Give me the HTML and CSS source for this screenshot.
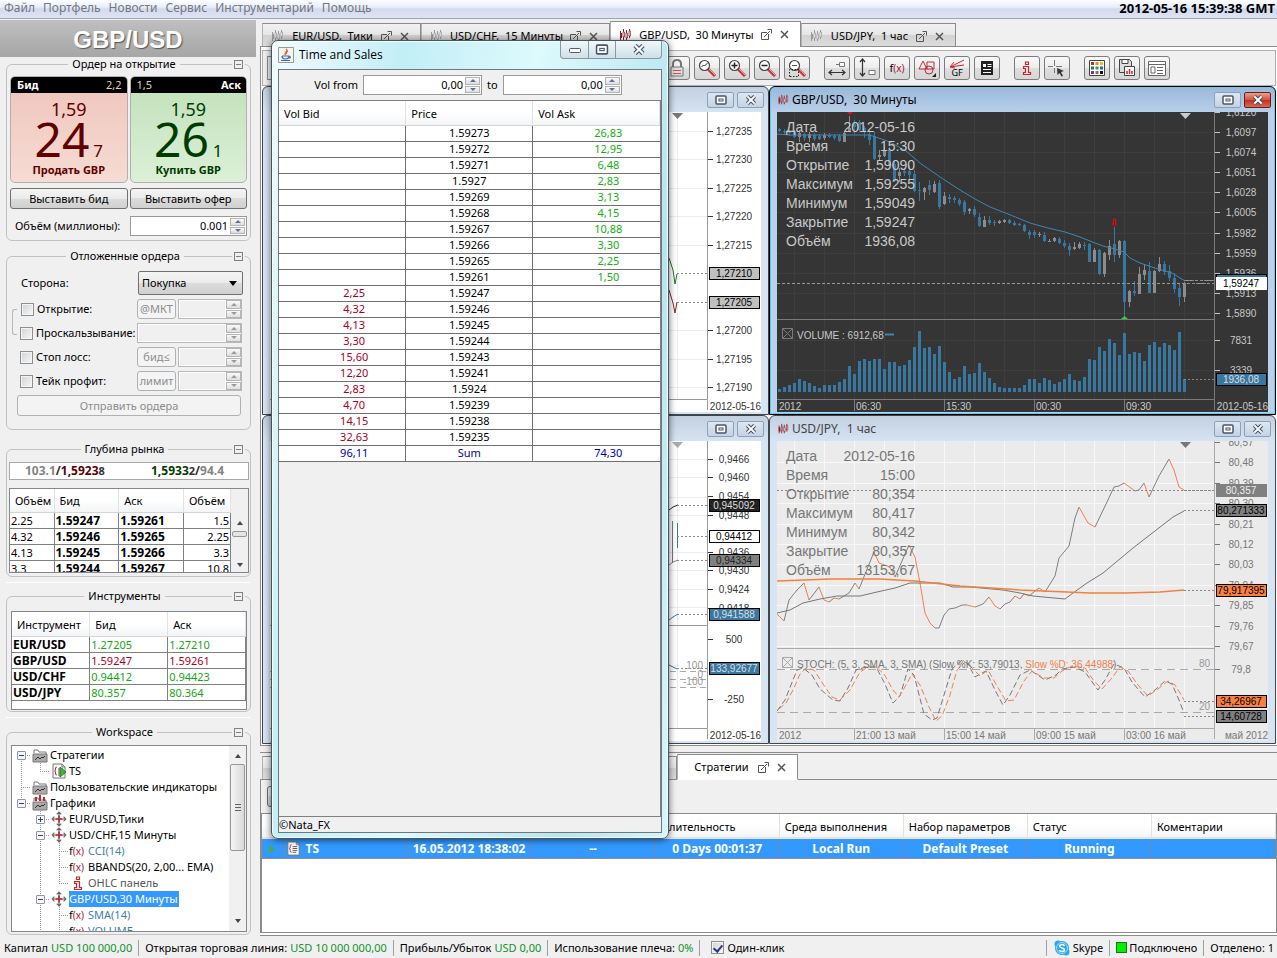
FILE: index.html
```html
<!DOCTYPE html>
<html lang="ru">
<head>
    <meta charset="UTF-8">
    <meta name="viewport" content="width=device-width, initial-scale=1.0">
    <title>GBP/USD - Trading Platform</title>
    <link rel="stylesheet" href="styles.css">
</head>
<body>
    <svg class="sprite" aria-hidden="true">
        <symbol id="i-candles" viewBox="0 0 14 14">
            <path d="M2.500 3v9M5.500 1v11M8.500 2v10M11.500 1v9" stroke="currentColor" fill="none"/>
            <path d="M2 5h2v5H2z" fill="currentColor"/>
            <path d="M5 4h1.500v5H5zM8 5h1.500v5H8zM11 3h1.500v5H11z" fill="#fff" stroke="currentColor" stroke-width=".7"/>
        </symbol>
        <symbol id="i-detach" viewBox="0 0 11 11">
            <path d="M6 3.500H.500v7h7V5M3 8l6-6M6.500.500h4v4" stroke="currentColor" fill="none"/>
        </symbol>
        <symbol id="i-close" viewBox="0 0 9 9">
            <path d="M1 1l7 7M8 1l-7 7" stroke="currentColor" stroke-width="1.500" fill="none"/>
        </symbol>
        <symbol id="i-max" viewBox="0 0 12 10">
            <rect x="1" y="1" width="10" height="8" rx="1" fill="#fff" stroke="#48566b" stroke-width="1.500"/>
            <rect x="4" y="4" width="4" height="2" fill="#fff" stroke="#48566b"/>
        </symbol>
        <symbol id="i-x" viewBox="0 0 12 11">
            <path d="M2 1.500l8 8M10 1.500l-8 8" stroke="#48566b" stroke-width="4.500"/>
            <path d="M2 1.500l8 8M10 1.500l-8 8" stroke="#fff" stroke-width="2.200"/>
        </symbol>
        <symbol id="i-lens" viewBox="0 0 20 20">
            <path d="M11 11l7 7" stroke="#c4343c" stroke-width="3"/>
            <path d="M12 11l6 6" stroke="#eda0a4"/>
            <circle cx="7.500" cy="7.500" r="5" fill="#fff" stroke="#444" stroke-width="1.200"/>
        </symbol>
        <symbol id="i-move" viewBox="0 0 14 14">
            <path d="M7 1v12M1 7h12M5 3l2-2 2 2M5 11l2 2 2-2M3 5L1 7l2 2M11 5l2 2-2 2" stroke="#666" fill="none"/>
            <path d="M7 4v6M4 7h6" stroke="#c22832" stroke-width="1.500"/>
        </symbol>
        <symbol id="i-folder" viewBox="0 0 16 16">
            <path d="M2 6V3h4l1 2h7v2" fill="#fff" stroke="#777"/>
            <path d="M1 7h14v8H1z" fill="#aaa" stroke="#777"/>
            <path d="M3 13l3-3 2 2 2-2 1 1 2-2" stroke="#333" fill="none"/>
        </symbol>
        <symbol id="i-info" viewBox="0 0 10 14">
            <path d="M3.500 1h3v2.500h-3zM1.500 5.500h5v6h2v2h-7v-2h2v-4h-2z" fill="#fbe5e6" stroke="#c22832" stroke-width="1.200"/>
        </symbol>
        <symbol id="i-script" viewBox="0 0 16 16">
            <path d="M2 1h9l3 3v11H2z" fill="#fff" stroke="#777"/>
            <path d="M11 1v3h3" fill="none" stroke="#777"/>
            <path d="M6 4q-2 0-1.500 2 .3 2-1 2 1.300 0 1 2-.5 2 1.500 2" fill="none" stroke="#c22832"/>
            <path d="M7 6h5M7 8h5M7 10h5M7 12h4" stroke="#555"/>
        </symbol>
    </svg>

    <header class="menubar">
        <nav class="menu">
            <a href="#">Файл</a>
            <a href="#">Портфель</a>
            <a href="#">Новости</a>
            <a href="#">Сервис</a>
            <a href="#">Инструментарий</a>
            <a href="#">Помощь</a>
        </nav>
        <time class="clock">2012-05-16 15:39:38 GMT</time>
    </header>

    <main class="main">
        <aside class="sidebar">
            <h1 class="pair">GBP/USD</h1>

            <fieldset class="group order">
                <legend>Ордер на открытие</legend>
                <button class="collapse" aria-label="Свернуть"></button>
                <div class="quotes">
                    <button class="quote bid">
                        <span class="quote-head"><b>Бид</b><i>2,2</i></span>
                        <span class="quote-big">1,59</span>
                        <span class="quote-pips">24<small>7</small></span>
                        <strong>Продать GBP</strong>
                    </button>
                    <button class="quote ask">
                        <span class="quote-head"><i>1,5</i><b>Аск</b></span>
                        <span class="quote-big">1,59</span>
                        <span class="quote-pips">26<small>1</small></span>
                        <strong>Купить GBP</strong>
                    </button>
                </div>
                <div class="place">
                    <button class="btn">Выставить бид</button>
                    <button class="btn">Выставить офер</button>
                </div>
                <div class="volume">
                    <label for="amount">Объём (миллионы):</label>
                    <div class="spin">
                        <input type="text" id="amount" value="0.001">
                        <span class="arrows"><button aria-label="Больше"></button><button aria-label="Меньше"></button></span>
                    </div>
                </div>
            </fieldset>

            <fieldset class="group pending">
                <legend>Отложенные ордера</legend>
                <button class="collapse" aria-label="Свернуть"></button>
                <div class="row">
                    <label for="side">Сторона:</label>
                    <select id="side"><option>Покупка</option></select>
                </div>
                <div class="row linked">
                    <label><input type="checkbox">Открытие:</label>
                    <button class="mini" disabled>@МКТ</button>
                    <div class="spin off">
                        <input type="text" aria-label="Цена открытия" disabled>
                        <span class="arrows"><button disabled aria-label="Больше"></button><button disabled aria-label="Меньше"></button></span>
                    </div>
                </div>
                <div class="row">
                    <label><input type="checkbox">Проскальзывание:</label>
                    <div class="spin off">
                        <input type="text" aria-label="Проскальзывание" disabled>
                        <span class="arrows"><button disabled aria-label="Больше"></button><button disabled aria-label="Меньше"></button></span>
                    </div>
                </div>
                <div class="row">
                    <label><input type="checkbox">Стоп лосс:</label>
                    <button class="mini" disabled>бид≤</button>
                    <div class="spin off">
                        <input type="text" aria-label="Стоп лосс" disabled>
                        <span class="arrows"><button disabled aria-label="Больше"></button><button disabled aria-label="Меньше"></button></span>
                    </div>
                </div>
                <div class="row">
                    <label><input type="checkbox">Тейк профит:</label>
                    <button class="mini" disabled>лимит</button>
                    <div class="spin off">
                        <input type="text" aria-label="Тейк профит" disabled>
                        <span class="arrows"><button disabled aria-label="Больше"></button><button disabled aria-label="Меньше"></button></span>
                    </div>
                </div>
                <button class="btn send" disabled>Отправить ордера</button>
            </fieldset>

            <fieldset class="group depth">
                <legend>Глубина рынка</legend>
                <button class="collapse" aria-label="Свернуть"></button>
                <div class="best">
                    <span><em>103.1</em>/<b class="sell">1,5923</b><small>8</small></span>
                    <span><b class="buy">1,5933</b><small>2</small>/<em>94.4</em></span>
                </div>
                <div class="scroller">
                    <table class="grid">
                        <thead>
                            <tr><th>Объём</th><th>Бид</th><th>Аск</th><th>Объём</th></tr>
                        </thead>
                        <tbody>
                            <tr><td>2.25</td><td><b>1.59247</b></td><td><b>1.59261</b></td><td>1.5</td></tr>
                            <tr><td>4.32</td><td><b>1.59246</b></td><td><b>1.59265</b></td><td>2.25</td></tr>
                            <tr><td>4.13</td><td><b>1.59245</b></td><td><b>1.59266</b></td><td>3.3</td></tr>
                            <tr><td>3.3</td><td><b>1.59244</b></td><td><b>1.59267</b></td><td>10.8</td></tr>
                        </tbody>
                    </table>
                    <div class="scrollbar"><i class="up"></i><i class="thumb"></i><i class="down"></i></div>
                </div>
            </fieldset>
            <hr>

            <fieldset class="group instruments">
                <legend>Инструменты</legend>
                <button class="collapse" aria-label="Свернуть"></button>
                <div class="frame">
                    <table class="grid">
                        <thead>
                            <tr><th>Инструмент</th><th>Бид</th><th>Аск</th></tr>
                        </thead>
                        <tbody>
                            <tr class="rise"><th>EUR/USD</th><td>1.27205</td><td>1.27210</td></tr>
                            <tr class="fall"><th>GBP/USD</th><td>1.59247</td><td>1.59261</td></tr>
                            <tr class="rise"><th>USD/CHF</th><td>0.94412</td><td>0.94423</td></tr>
                            <tr class="rise"><th>USD/JPY</th><td>80.357</td><td>80.364</td></tr>
                        </tbody>
                    </table>
                </div>
            </fieldset>
            <hr>

            <fieldset class="group workspace">
                <legend>Workspace</legend>
                <button class="collapse" aria-label="Свернуть"></button>
                <div class="scroller">
                    <ul class="tree">
                        <li><i class="cell down"><s class="minus"></s></i><svg class="ico"><use href="#i-folder"/></svg>Стратегии</li>
                        <li><i class="cell pipe"></i><i class="cell elbow"></i><svg class="ico" viewBox="0 0 16 16"><use href="#i-script"/><path d="M9 4l6 5-6 5z" fill="#4caf3a" stroke="#2c7d20"/></svg>TS</li>
                        <li><i class="cell pipe tee"></i><svg class="ico"><use href="#i-folder"/></svg>Пользовательские индикаторы</li>
                        <li><i class="cell elbow"><s class="minus"></s></i><svg class="ico" viewBox="0 0 16 16"><use href="#i-folder"/><path d="M4 6V2M8 6V0M12 6V2" stroke="#d0202c" stroke-width="2"/></svg>Графики</li>
                        <li><i class="cell"></i><i class="cell pipe tee"><s class="plus"></s></i><svg class="ico"><use href="#i-move"/></svg>EUR/USD,Тики</li>
                        <li><i class="cell"></i><i class="cell pipe tee"><s class="minus"></s></i><svg class="ico"><use href="#i-move"/></svg>USD/CHF,15 Минуты</li>
                        <li class="ind"><i class="cell"></i><i class="cell pipe"></i><i class="cell pipe tee"></i><span class="fx">f<u>(x)</u></span>CCI(14)</li>
                        <li><i class="cell"></i><i class="cell pipe"></i><i class="cell pipe tee"></i><span class="fx">f<u>(x)</u></span>BBANDS(20, 2,00... EMA)</li>
                        <li class="ohlc"><i class="cell"></i><i class="cell pipe"></i><i class="cell elbow"></i><svg class="ico"><use href="#i-info"/></svg>OHLC панель</li>
                        <li><i class="cell"></i><i class="cell pipe tee"><s class="minus"></s></i><svg class="ico"><use href="#i-move"/></svg><span class="selected">GBP/USD,30 Минуты</span></li>
                        <li class="ind"><i class="cell"></i><i class="cell pipe"></i><i class="cell pipe tee"></i><span class="fx">f<u>(x)</u></span>SMA(14)</li>
                        <li class="ind"><i class="cell"></i><i class="cell pipe"></i><i class="cell pipe tee"></i><span class="fx">f<u>(x)</u></span>VOLUME</li>
                    </ul>
                    <div class="scrollbar"><i class="up"></i><i class="thumb"></i><i class="down"></i></div>
                </div>
            </fieldset>
        </aside>

        <section class="desk">
            <div class="tabs">
                <div class="tab t1"><svg class="cnd"><use href="#i-candles"/></svg><span>EUR/USD,&nbsp; Тики</span><svg class="det"><use href="#i-detach"/></svg><svg class="cls"><use href="#i-close"/></svg></div>
                <div class="tab t2"><svg class="cnd"><use href="#i-candles"/></svg><span>USD/CHF,&nbsp; 15 Минуты</span><svg class="det"><use href="#i-detach"/></svg><svg class="cls"><use href="#i-close"/></svg></div>
                <div class="tab t3 active"><svg class="cnd"><use href="#i-candles"/></svg><span>GBP/USD,&nbsp; 30 Минуты</span><svg class="det"><use href="#i-detach"/></svg><svg class="cls"><use href="#i-close"/></svg></div>
                <div class="tab t4"><svg class="cnd"><use href="#i-candles"/></svg><span>USD/JPY,&nbsp; 1 час</span><svg class="det"><use href="#i-detach"/></svg><svg class="cls"><use href="#i-close"/></svg></div>
            </div>

            <div class="charts">
                <div class="toolbar">
                    <button class="picker" aria-label="Инструмент"></button>
                    <div class="tools">
                        <button aria-label="Блокировка"><svg viewBox="0 0 20 20"><path d="M6 10V6q0-4 4-4t4 4v4" fill="none" stroke="#777" stroke-width="2"/><path d="M4 9h12v9H4z" fill="#ddd" stroke="#777"/><path d="M6 12l1 1 1-1 1 1 1-1 1 1 1-1 1 1 1-1M6 15l1 1 1-1 1 1 1-1 1 1 1-1 1 1 1-1" fill="none" stroke="#d05058"/></svg></button>
                        <button aria-label="Авто масштаб"><svg viewBox="0 0 20 20"><use href="#i-lens"/><path d="M4.500 9l2-2 1 1 3-3" fill="none" stroke="#333"/></svg></button>
                        <button aria-label="Увеличить"><svg viewBox="0 0 20 20"><use href="#i-lens"/><path d="M4.500 7.500h6M7.500 4.500v6" stroke="#222" stroke-width="1.500"/></svg></button>
                        <button aria-label="Уменьшить"><svg viewBox="0 0 20 20"><use href="#i-lens"/><path d="M4.500 7.500h6" stroke="#222" stroke-width="1.500"/></svg></button>
                        <button aria-label="Масштаб области"><svg viewBox="0 0 20 20"><use href="#i-lens"/><path d="M5 7.500h5" stroke="#555"/><path d="M2.500 18.500v-7h9v7z" fill="none" stroke="#222" stroke-dasharray="1.500 1.500"/></svg></button>
                    </div>
                    <div class="tools">
                        <button aria-label="Горизонтальный сдвиг"><svg viewBox="0 0 20 20"><path d="M2 14.500h16M5 12l-3 2.500L5 17M15 12l3 2.500-3 2.500" fill="none" stroke="#333" stroke-width="1.200"/><path d="M12.500 4.500h5v4h-5zM9 6.500h3" fill="#fff" stroke="#777"/></svg></button>
                        <button aria-label="Вертикальный сдвиг"><svg viewBox="0 0 20 20"><path d="M5.500 1v17M3 4l2.500-3L8 4M3 15l2.500 3L8 15" fill="none" stroke="#333" stroke-width="1.200"/><path d="M12 12.500h6v4h-6z" fill="#fff" stroke="#777"/></svg></button>
                        <button class="func" aria-label="Индикаторы">f<u>(x)</u></button>
                        <button aria-label="Фигуры"><svg viewBox="0 0 20 20"><path d="M6 3l4 8H2zM10 4h7v7h-7z" fill="none" stroke="#c22832"/><circle cx="12" cy="12" r="4" fill="none" stroke="#c22832"/><path d="M15 19h4v-4z" fill="#222"/></svg></button>
                        <button class="gf" aria-label="Ганн и Фибоначчи"><svg viewBox="0 0 20 10"><path d="M3 8L17 1M3 8l14-2M3 8l4-5M3 8l5 1" fill="none" stroke="#c22832"/></svg>GF</button>
                        <button aria-label="Новости"><svg viewBox="0 0 20 20"><path d="M4 3h12v14H4z" fill="#222"/><path d="M6 6h3v3H6zM10.500 6h4v1h-4zM10.500 8h4v1h-4zM6 11h8v1H6zM6 14h8v1H6z" fill="#fff"/></svg></button>
                    </div>
                    <div class="tools">
                        <button aria-label="Информация"><svg viewBox="0 0 20 20"><use href="#i-info" x="5" y="3" width="10" height="14"/></svg></button>
                        <button aria-label="Курсор"><svg viewBox="0 0 20 20"><path d="M7.500 2v6M7.500 10v5M1 8.500h5M9 8.500h6" stroke="#777"/><path d="M10 10l7 3-3 1 2 4-1.500.600-2-3.600-2 2z" fill="#333"/></svg></button>
                    </div>
                    <div class="tools">
                        <button aria-label="Темы"><svg viewBox="0 0 20 20"><path d="M2.500 2.500h15v15h-15z" fill="#fff" stroke="#444"/><path d="M4 4h3v3H4z" fill="#c22832"/><path d="M8.500 4h3v3h-3z" fill="#e88a20"/><path d="M13 4h3v3h-3z" fill="#e8c020"/><path d="M4 8.500h3v3H4z" fill="#208040"/><path d="M8.500 8.500h3v3h-3z" fill="#30a060"/><path d="M13 8.500h3v3h-3z" fill="#2868c0"/><path d="M4 13h3v3H4z" fill="#8030a0"/><path d="M8.500 13h3v3h-3z" fill="#777"/><path d="M13 13h3v3h-3z" fill="#111"/></svg></button>
                        <button aria-label="Сохранить"><svg viewBox="0 0 20 20"><path d="M2.500 1.500h10l2 2v11h-12z" fill="#ddd" stroke="#444"/><path d="M5 1.500h6v4H5z" fill="#fff" stroke="#444"/><path d="M7.500 8.500h10v9h-10z" fill="#fff" stroke="#444"/><path d="M10 16v-3M12.500 16v-5M15 16v-3" stroke="#c22832" stroke-width="1.500"/></svg></button>
                        <button aria-label="Шаблоны"><svg viewBox="0 0 20 20"><path d="M1.500 3.500h17v14h-17zM1.500 6.500h17" fill="#fff" stroke="#666"/><path d="M4 9h4v6H4z" fill="none" stroke="#666"/><path d="M10 9.500h6M10 12.500h6M10 15.500h6" stroke="#666"/></svg></button>
                    </div>
                </div>

                <div class="mdi">
                    <article class="win">
                        <h2><span></span><button aria-label="Развернуть"><svg><use href="#i-max"/></svg></button><button aria-label="Закрыть"><svg><use href="#i-x"/></svg></button></h2>
                        <svg class="chart" id="eurusd" viewBox="270 112 491 300" preserveAspectRatio="xMaxYMin slice"></svg>
                    </article>
                    <article class="win front">
                        <h2><svg class="cnd"><use href="#i-candles"/></svg><span>GBP/USD,&nbsp; 30 Минуты</span><button aria-label="Развернуть"><svg><use href="#i-max"/></svg></button><button class="red" aria-label="Закрыть"><svg><use href="#i-x"/></svg></button></h2>
                        <svg class="chart dark" id="gbpusd" viewBox="777 112 491 300" preserveAspectRatio="xMaxYMin slice"></svg>
                    </article>
                    <article class="win">
                        <h2><span></span><button aria-label="Развернуть"><svg><use href="#i-max"/></svg></button><button aria-label="Закрыть"><svg><use href="#i-x"/></svg></button></h2>
                        <svg class="chart" id="usdchf" viewBox="270 441 491 300" preserveAspectRatio="xMaxYMin slice"></svg>
                    </article>
                    <article class="win">
                        <h2><svg class="cnd"><use href="#i-candles"/></svg><span>USD/JPY,&nbsp; 1 час</span><button aria-label="Развернуть"><svg><use href="#i-max"/></svg></button><button aria-label="Закрыть"><svg><use href="#i-x"/></svg></button></h2>
                        <svg class="chart grey" id="usdjpy" viewBox="777 441 491 300" preserveAspectRatio="xMaxYMin slice"></svg>
                    </article>
                </div>
            </div>

            <div class="bottom">
                <div class="tabs">
                    <div class="tab back"></div>
                    <div class="tab strategies active"><span>Стратегии</span><svg class="det"><use href="#i-detach"/></svg><svg class="cls"><use href="#i-close"/></svg></div>
                </div>
                <div class="actions"><button class="btn" aria-label="Запустить"></button></div>
                <div class="runs">
                    <table>
                        <colgroup><col class="c-run"><col class="c-name"><col span="7"></colgroup>
                        <thead>
                            <tr><th></th><th></th><th></th><th></th><th>Длительность</th><th>Среда выполнения</th><th>Набор параметров</th><th>Статус</th><th>Коментарии</th></tr>
                        </thead>
                        <tbody>
                            <tr><td><i class="play"></i></td><td class="name"><svg class="ico"><use href="#i-script"/></svg>TS</td><td>16.05.2012 18:38:02</td><td>--</td><td>0 Days 00:01:37</td><td>Local Run</td><td>Default Preset</td><td>Running</td><td></td></tr>
                        </tbody>
                    </table>
                </div>
            </div>
        </section>
    </main>

    <footer class="status">
        <span>Капитал <b>USD 100 000,00</b></span>
        <span>Открытая торговая линия: <b>USD 10 000 000,00</b></span>
        <span>Прибыль/Убыток <b>USD 0,00</b></span>
        <span>Использование плеча: <b>0%</b></span>
        <label><input type="checkbox" checked>Один-клик</label>
        <span class="push"><svg class="skype" viewBox="0 0 16 16"><circle cx="8" cy="8" r="7" fill="#2aaae8"/><circle cx="4" cy="4" r="3.500" fill="#2aaae8"/><circle cx="12" cy="12" r="3.500" fill="#2aaae8"/><circle cx="8" cy="8" r="5.500" fill="none" stroke="#bfe6fa" stroke-width=".8"/><path d="M10.500 6q-.5-1.500-2.500-1.500T5.500 6q0 1.300 2.500 2t2.500 2q0 1.500-2.500 1.500T5.500 10" fill="none" stroke="#fff" stroke-width="1.500"/></svg>Skype</span>
        <span><i class="led"></i>Подключено</span>
        <span>Отделено: 1</span>
    </footer>

    <div class="dialog" role="dialog" aria-label="Time and Sales">
        <div class="caption">
            <svg class="java" viewBox="0 0 16 16"><path d="M.500.500h15v15H.500z" fill="#f4f4f4" stroke="#999"/><path d="M8 2q2 1 0 3t0 3M10 4q-2 1-1.500 3" fill="none" stroke="#e06a1c" stroke-width="1.300"/><path d="M4 9h7q0 3-3.500 3T4 9M11 9.500q2.500 0 .5 2M3 13.500h9" fill="none" stroke="#3b6a9c" stroke-width="1.200"/></svg>
            <span>Time and Sales</span>
            <div class="caption-buttons">
                <button class="min" aria-label="Свернуть"><svg viewBox="0 0 14 10"><rect x="1.500" y="4" width="11" height="4" rx="1" fill="#fff" stroke="#555c66"/></svg></button>
                <button class="max" aria-label="Развернуть"><svg viewBox="0 0 12 10"><use href="#i-max"/></svg></button>
                <button class="close" aria-label="Закрыть"><svg viewBox="0 0 12 11"><use href="#i-x"/></svg></button>
            </div>
        </div>
        <div class="client">
            <div class="filter">
                <label for="vol-from">Vol from</label>
                <div class="spin">
                    <input type="text" id="vol-from" value="0,00">
                    <span class="arrows"><button aria-label="Больше"></button><button aria-label="Меньше"></button></span>
                </div>
                <label for="vol-to">to</label>
                <div class="spin">
                    <input type="text" id="vol-to" value="0,00">
                    <span class="arrows"><button aria-label="Больше"></button><button aria-label="Меньше"></button></span>
                </div>
            </div>
            <div class="ticks">
                <table>
                    <thead>
                        <tr><th>Vol Bid</th><th>Price</th><th>Vol Ask</th></tr>
                    </thead>
                    <tbody>
                        <tr><td></td><td>1.59273</td><td>26,83</td></tr>
                        <tr><td></td><td>1.59272</td><td>12,95</td></tr>
                        <tr><td></td><td>1.59271</td><td>6,48</td></tr>
                        <tr><td></td><td>1.5927</td><td>2,83</td></tr>
                        <tr><td></td><td>1.59269</td><td>3,13</td></tr>
                        <tr><td></td><td>1.59268</td><td>4,15</td></tr>
                        <tr><td></td><td>1.59267</td><td>10,88</td></tr>
                        <tr><td></td><td>1.59266</td><td>3,30</td></tr>
                        <tr><td></td><td>1.59265</td><td>2,25</td></tr>
                        <tr><td></td><td>1.59261</td><td>1,50</td></tr>
                        <tr><td>2,25</td><td>1.59247</td><td></td></tr>
                        <tr><td>4,32</td><td>1.59246</td><td></td></tr>
                        <tr><td>4,13</td><td>1.59245</td><td></td></tr>
                        <tr><td>3,30</td><td>1.59244</td><td></td></tr>
                        <tr><td>15,60</td><td>1.59243</td><td></td></tr>
                        <tr><td>12,20</td><td>1.59241</td><td></td></tr>
                        <tr><td>2,83</td><td>1.5924</td><td></td></tr>
                        <tr><td>4,70</td><td>1.59239</td><td></td></tr>
                        <tr><td>14,15</td><td>1.59238</td><td></td></tr>
                        <tr><td>32,63</td><td>1.59235</td><td></td></tr>
                        <tr class="sum"><td>96,11</td><td>Sum</td><td>74,30</td></tr>
                    </tbody>
                </table>
            </div>
            <div class="copy">©Nata_FX</div>
        </div>
    </div>

    <script src="charts.js"></script>
</body>
</html>
```
FILE: styles.css
```css
* {
    box-sizing: border-box;
}
body {
    margin: 0;
    height: 100vh;
    display: flex;
    flex-direction: column;
    overflow: hidden;
    background: #f0f0f0;
    color: #000;
    font-family: "Noto Sans", "Open Sans", sans-serif;
    font-size: 11px;
    line-height: 16px;
    white-space: nowrap;
}
button, input, select {
    font: inherit;
    color: inherit;
    margin: 0;
    padding: 0;
}
button:disabled {
    color: #8c8c8c;
}
table {
    border-collapse: collapse;
    table-layout: fixed;
    width: 100%;
}
b, strong {
    font-weight: bold;
}
i, em {
    font-style: normal;
}
u, s {
    text-decoration: none;
}
.sprite {
    display: none;
}

/* menu */
.menubar {
    display: flex;
    justify-content: space-between;
    height: 19px;
    padding: 0 2px 0 4px;
    background: linear-gradient(#fdfeff, #e8edf7 40%, #d2daee 50%, #dfe4f4);
    border-bottom: 1px solid #a0a4ac;
    flex: none;
}
.menu {
    display: flex;
    gap: 8px;
    font-size: 12px;
}
.menu a {
    color: #74777f;
    text-decoration: none;
}
.clock {
    font-size: 13px;
    font-weight: bold;
}

.main {
    display: flex;
    flex: 1;
    min-height: 0;
}

/* left column */
.sidebar {
    width: 256px;
    flex: none;
    display: flex;
    flex-direction: column;
}
.pair {
    margin: 1px 0 0;
    height: 37px;
    background: linear-gradient(#bfbfbf, #a6a6a6);
    color: #fff;
    text-shadow: 1px 1px 1px #555;
    text-align: center;
    font: bold 24px/40px "Liberation Sans", Arial, sans-serif;
    flex: none;
}
.group {
    position: relative;
    min-width: 0;
    margin: 0 5px 0 6px;
    padding: 0;
    border: 1px solid #c2c2c2;
    border-radius: 6px;
    flex: none;
}
.group legend {
    display: flex;
    align-items: center;
    margin: 0 auto;
    padding: 0 0 0 4px;
}
/* the border goes on a little way after the caption */
.group legend::after {
    content: "";
    width: 9px;
    height: 1px;
    margin-left: 4px;
    background: #c2c2c2;
}
.group.order {
    margin-top: -1px;
}
.collapse {
    position: absolute;
    right: 7px;
    top: -12px;
    width: 9px;
    height: 9px;
    border: 1px solid #808080;
    background: linear-gradient(#808080, #808080) center / 5px 1px no-repeat #f0f0f0;
    box-shadow: 0 0 0 2px #f0f0f0;
}
.sidebar hr {
    width: 244px;
    margin: 5px 6px;
    border: 0;
    border-top: 1px solid #fff;
    flex: none;
}
.order {
    height: 185px;
}
.quotes, .place {
    display: flex;
    gap: 2px;
    padding: 4px 3px 0;
}
.quote {
    flex: 1;
    height: 107px;
    border: 1px solid #b5aeae;
    border-radius: 5px;
    overflow: hidden;
    display: flex;
    flex-direction: column;
    align-items: center;
}
.quote-head {
    align-self: stretch;
    display: flex;
    justify-content: space-between;
    padding: 0 5px 0 6px;
    background: #000;
    color: #fff;
}
.quote-head i {
    color: #d8d8b8;
}
.quote-big {
    font-size: 18px;
    line-height: 20px;
    margin-top: 6px;
}
.quote-pips {
    display: flex;
    align-items: baseline;
    height: 40px;
    font-size: 48px;
    line-height: 40px;
}
.quote-pips small {
    font-size: 17px;
    line-height: 17px;
    margin-left: 4px;
}
.quote strong {
    margin-top: 3px;
}
.bid {
    background: linear-gradient(#f0c4bc, #f5dcd4);
    color: #600000;
}
.ask {
    background: linear-gradient(#c0e0b8, #dcf0d8);
    color: #003c00;
}
.place {
    padding-top: 5px;
}
.btn {
    flex: 1;
    height: 21px;
    border: 1px solid #707070;
    border-radius: 3px;
    background: linear-gradient(#f4f4f4, #ebebeb 50%, #dcdcdc 50%, #d0d0d0);
    line-height: 18px;
}
.btn:disabled {
    border-color: #adb2b5;
    background: #f3f3f3;
}
.volume {
    display: flex;
    align-items: center;
    justify-content: space-between;
    padding: 7px 3px 0 8px;
}
.volume .spin {
    width: 117px;
}

.spin {
    display: flex;
    height: 20px;
    padding: 1px;
    border: 1px solid #9a9a9a;
    background: #fff;
}
.spin input {
    flex: 1;
    min-width: 0;
    border: 0;
    padding-right: 2px;
    background: none;
    text-align: right;
}
.arrows {
    width: 15px;
    display: flex;
    flex-direction: column;
    gap: 1px;
}
.arrows button {
    flex: 1;
    border: 1px solid #b4b4b4;
    background: linear-gradient(#fafafa, #dedede);
    display: flex;
    align-items: center;
    justify-content: center;
}
.arrows button::before {
    content: "";
    border: 3px solid transparent;
    border-top-width: 0;
    border-bottom-color: #5f6f9c;
}
.arrows button:last-child::before {
    border-top: 3px solid #5f6f9c;
    border-bottom-width: 0;
}
.spin.off {
    border-color: #b8b8b8;
    padding: 0;
}
.spin.off input {
    background: #f0f0f0;
    margin: 1px;
}
.spin.off .arrows button::before {
    border-bottom-color: #9a9a9a;
}
.spin.off .arrows button:last-child::before {
    border-top-color: #9a9a9a;
}

.pending {
    margin-top: 7px;
    height: 182px;
    padding: 7px 8px 0 10px;
}
.row {
    display: flex;
    align-items: center;
    gap: 2px;
    height: 24px;
}
.row:not(:has([type="checkbox"])) {
    padding-left: 4px;
    margin-bottom: 2px;
}
.row label {
    flex: 1;
    display: flex;
    align-items: center;
    gap: 3px;
}
select {
    width: 105px;
    height: 24px;
    appearance: none;
    border: 1px solid #707070;
    border-radius: 2px;
    padding-left: 3px;
    background: linear-gradient(#f4f4f4, #ebebeb 50%, #dcdcdc 50%, #d0d0d0);
}
.row:has(select)::after {
    content: "";
    width: 0;
    margin: 0 5px 0 -16px;
    border: 4px solid transparent;
    border-top: 5px solid #000;
    border-bottom: 0;
}
[type="checkbox"] {
    appearance: none;
    width: 13px;
    height: 13px;
    flex: none;
    border: 1px solid #8e8f8f;
    background: linear-gradient(135deg, #cfd3d8, #f8f8f8);
    box-shadow: inset 0 0 0 1px #f4f4f4;
}
.row label:has([type="checkbox"]) {
    min-width: 0;
    padding-left: 3px;
}
.mini {
    width: 39px;
    height: 20px;
    border: 1px solid #adb2b5;
    border-radius: 3px;
    background: #f4f4f4;
}
.row .spin {
    width: 64px;
    flex: none;
}
.row label + .spin {
    width: 105px;
}
.linked::before {
    content: "";
    align-self: flex-start;
    width: 4px;
    height: 24px;
    margin: 12px -1px 0 -5px;
    border: 1px solid #b8b8b8;
    border-right: 0;
    border-radius: 3px 0 0 3px;
}
.send {
    width: 224px;
    margin-top: 2px;
}

.depth {
    margin-top: 11px;
    height: 136px;
    padding: 5px 1px 0 2px;
}
.best {
    display: flex;
    justify-content: space-between;
    height: 18px;
    padding: 0 24px 0 15px;
    border: 1px solid #a8a8a8;
    background: #fff;
    color: #333;
    font-weight: bold;
    font-size: 12px;
}
.best em {
    color: #858585;
}
.best small {
    font-size: 11px;
}
.sell {
    color: #600000;
}
.buy {
    color: #003c00;
}
.scroller, .frame {
    display: flex;
    overflow: hidden;
    background: #fff;
    border: 1px solid #828790;
}
.depth .scroller {
    height: 85px;
    margin-top: 8px;
    align-items: flex-start;
}
.depth .scrollbar {
    align-self: stretch;
}
.grid thead th {
    height: 24px;
    padding: 2px 5px 0;
    font-weight: normal;
    text-align: left;
    background: linear-gradient(#fff 50%, #f2f4f6);
    border-right: 1px solid #e0e2e6;
    border-bottom: 1px solid #d5d5d5;
}
.depth .grid thead th {
    height: 23px;
}
.grid td, .grid tbody th {
    height: 16px;
    padding: 0 1px;
    line-height: 15px;
    text-align: left;
    border-right: 1px solid #808080;
    border-bottom: 1px solid #808080;
}
.depth th:nth-child(1) {
    width: 44px;
}
.depth th:nth-child(4) {
    width: 47px;
}
.depth .grid td:last-child {
    text-align: right;
}
.grid b, .grid tbody th {
    font-size: 12px;
}
.scrollbar {
    width: 17px;
    flex: none;
    background: #f0f0f0;
    display: flex;
    flex-direction: column;
    align-items: center;
    padding: 8px 0;
}
.depth .scrollbar {
    padding: 32px 0 5px;
}
.scrollbar .up, .scrollbar .down {
    border: 3px solid transparent;
    border-top: 0;
    border-bottom: 4px solid #444;
}
.scrollbar .down {
    margin-top: auto;
    border-bottom: 0;
    border-top: 4px solid #444;
}
.thumb {
    width: 15px;
    height: 87px;
    margin-top: 6px;
    border: 1px solid #979797;
    border-radius: 2px;
    background:
        repeating-linear-gradient(#666 0 1px, transparent 1px 3px) center / 6px 7px no-repeat,
        linear-gradient(90deg, #f5f5f5, #d9d9d9);
}
.depth .thumb {
    height: 6px;
    background: #e4e4e4;
}

.instruments {
    height: 124px;
    padding: 7px 3px 0 4px;
}
.instruments + hr {
    margin-bottom: 6px;
}
.instruments .frame {
    height: 99px;
    align-items: flex-start;
}
.rise td {
    color: #10a810;
}
.fall td {
    color: #b00020;
}

.workspace {
    height: 211px;
    padding: 5px 3px 0 4px;
}
.workspace .scroller {
    height: 187px;
}
.tree {
    flex: 1;
    min-width: 0;
    margin: 0;
    padding: 1px 0 0;
    list-style: none;
    overflow: hidden;
}
.tree li {
    display: flex;
    height: 16px;
    align-items: center;
}
.tree .ico {
    width: 16px;
    height: 16px;
    margin: 0 2px 0 1px;
    flex: none;
}
.tree .ohlc .ico {
    height: 14px;
}
.cell {
    width: 19px;
    height: 16px;
    flex: none;
    display: flex;
    align-items: center;
    justify-content: center;
    background-repeat: no-repeat;
}
/* dotted guides: vertical part first, branch second */
.pipe {
    background-image: repeating-linear-gradient(#999 0 1px, transparent 1px 2px);
    background-size: 1px 16px;
    background-position: 9px 0;
}
.tree .down {
    background-image: repeating-linear-gradient(#999 0 1px, transparent 1px 2px), repeating-linear-gradient(90deg, #999 0 1px, transparent 1px 2px);
    background-size: 1px 8px, 10px 1px;
    background-position: 9px 8px, 9px 8px;
}
.elbow {
    background-image: repeating-linear-gradient(#999 0 1px, transparent 1px 2px), repeating-linear-gradient(90deg, #999 0 1px, transparent 1px 2px);
    background-size: 1px 8px, 10px 1px;
    background-position: 9px 0, 9px 8px;
}
.tee {
    background-image: repeating-linear-gradient(#999 0 1px, transparent 1px 2px), repeating-linear-gradient(90deg, #999 0 1px, transparent 1px 2px);
    background-size: 1px 16px, 10px 1px;
    background-position: 9px 0, 9px 8px;
}
.minus, .plus {
    width: 9px;
    height: 9px;
    border: 1px solid #8a96a8;
    border-radius: 1px;
    background: linear-gradient(#345, #345) center / 5px 1px no-repeat, #f4f6fa;
}
.plus {
    background: linear-gradient(#345, #345) center / 5px 1px no-repeat, linear-gradient(#345, #345) center / 1px 5px no-repeat, #f4f6fa;
}
.fx {
    width: 19px;
    flex: none;
}
.fx u, .func u {
    color: #a02030;
    font-size: 10px;
}
.ind {
    color: #3f7fa8;
}
.ind .fx {
    color: #000;
}
.ohlc {
    color: #555;
}
.selected {
    background: #3399ff;
    color: #fff;
    padding-right: 1px;
}

/* right column */
.desk {
    flex: 1;
    min-width: 0;
    margin-left: 4px;
    display: flex;
    flex-direction: column;
}
.tabs {
    display: flex;
    align-items: flex-end;
    height: 28px;
    padding-left: 2px;
    border-bottom: 1px solid #8c8c8c;
    flex: none;
}
.tab {
    display: flex;
    align-items: center;
    height: 23px;
    padding: 2px 7px 0;
    border: 1px solid #8c8c8c;
    border-left-color: #b0b0b0;
    border-bottom: 0;
    background: linear-gradient(#f2f2f2, #e6e6e6 50%, #d2d2d2 50%, #dcdcdc);
}
.tab.active {
    height: 26px;
    margin-bottom: -1px;
    padding-top: 0;
    background: #fff;
}
.t1 {
    width: 159px;
}
.t2 {
    width: 189px;
}
.t3 {
    width: 191px;
}
.t4 {
    width: 155px;
}
.tab span {
    margin: 0 auto;
}
.cnd {
    width: 14px;
    height: 14px;
    color: #999;
}
.active .cnd, .win .cnd {
    color: #8c2028;
}
.det {
    width: 11px;
    height: 11px;
    color: #555;
    margin-right: 8px;
}
.cls {
    width: 9px;
    height: 9px;
    color: #555;
    margin-right: 4px;
}
.charts {
    flex: 1;
    min-height: 0;
    display: flex;
    flex-direction: column;
    border-left: 1px solid #8c8c8c;
    border-bottom: 1px solid #8c8c8c;
    padding: 3px 1px 1px 1px;
    background: #fff;
}
.toolbar {
    display: flex;
    align-items: center;
    gap: 14px;
    height: 36px;
    padding: 0 4px;
    border: 1px solid #b0b0b0;
    background: #f0f0f0;
    flex: none;
}
.picker {
    width: 383px;
    height: 24px;
    border: 1px solid #8c8c8c;
    background: #f0f0f0;
}
.tools {
    display: flex;
    gap: 4px;
}
.tools button {
    width: 26px;
    height: 24px;
    border: 1px solid #7c7c7c;
    border-radius: 3px;
    background: linear-gradient(#f8f8f8, #ededed 50%, #dedede 50%, #d6d6d6);
    display: flex;
    align-items: center;
    justify-content: center;
    line-height: 10px;
}
.tools svg {
    width: 20px;
    height: 20px;
}
.tools .gf {
    flex-direction: column;
    font-size: 9px;
    line-height: 8px;
}
.tools .gf svg {
    height: 10px;
}
.mdi {
    flex: 1;
    min-height: 0;
    display: grid;
    grid-template-columns: 1fr 1fr;
    grid-template-rows: 1fr 1fr;
    background: #fff;
}
.win {
    min-width: 0;
    min-height: 0;
    display: flex;
    flex-direction: column;
    padding: 0 7px 2px;
    border: 1px solid #40454c;
    border-radius: 6px 6px 0 0;
    background: linear-gradient(#c2d0e0, #d7e4f2 26px);
}
.win.front {
    background: linear-gradient(#9ab8d8, #b9d1ea 26px);
    box-shadow: inset 0 0 0 1px #6ec8e8;
    border-color: #000;
}
.win h2 {
    display: flex;
    align-items: center;
    height: 25px;
    margin: 0 -3px 0 0;
    gap: 3px;
    font-size: 12px;
    font-weight: normal;
    flex: none;
}
.win:not(.front) h2 {
    color: #444;
}
.win h2 .cnd {
    width: 12px;
    height: 12px;
}
.win h2 span {
    flex: 1;
}
.win h2 button {
    width: 27px;
    height: 16px;
    border: 1px solid #8ea0b8;
    border-radius: 2px;
    background: linear-gradient(#dde7f2, #c4d3e4);
    display: flex;
    align-items: center;
    justify-content: center;
}
.win h2 button svg {
    width: 12px;
    height: 10px;
}
.win h2 .red {
    background: linear-gradient(#e8a08c, #d0503c 50%, #c03020 50%, #d86850);
    border-color: #6c2018;
}
.chart {
    flex: 1;
    min-height: 0;
    width: 100%;
    background: #fff;
    font-family: "Liberation Sans", Arial, sans-serif;
    font-size: 10px;
    --ink: #333;
    --line: #999;
    --grid: #ececec;
}
.chart.dark {
    background: #353535;
    --ink: #c8c8c8;
    --line: #7a7a7a;
    --grid: #3e3e3e;
}
.chart.grey {
    background: #ebebeb;
    --ink: #777;
    --line: #aaa;
    --grid: #f8f8f8;
}
.chart text {
    fill: var(--ink);
}
.chart .info {
    font-size: 14px;
}
.chart .axis {
    stroke: var(--line);
    fill: none;
}
.chart .gridline {
    stroke: var(--grid);
    fill: none;
}

/* strategies */
.bottom {
    height: 191px;
    display: flex;
    flex-direction: column;
    padding-top: 6px;
    flex: none;
}
.bottom .tabs {
    border-top: 1px solid #8c8c8c;
    height: 28px;
}
.bottom .tab.active {
    border-bottom: 1px solid #fff;
}
.back {
    width: 415px;
}
.strategies {
    width: 121px;
}
.actions {
    height: 33px;
    padding: 6px;
    border-left: 1px solid #8c8c8c;
    flex: none;
}
.actions .btn {
    width: 60px;
}
.runs {
    flex: 1;
    min-height: 0;
    margin: 0 0 4px 0;
    border: 1px solid #8c8c8c;
    border-width: 1px 1px 1px 2px;
    background: #fff;
    box-shadow: 0 2px 0 #fff, 0 3px 0 #8c8c8c;
}
.c-run {
    width: 20px;
}
.c-name {
    width: 125px;
}
.runs th {
    height: 24px;
    padding: 2px 5px 0;
    border-right: 1px solid #e0e2e6;
    border-bottom: 2px solid #e4e4e4;
    font-weight: normal;
    text-align: left;
    background: linear-gradient(#fff 50%, #f2f4f6);
    overflow: hidden;
}
.runs td {
    height: 20px;
    padding: 0;
    border-right: 1px solid #6a8cb0;
    background: #3399ff;
    border-bottom: 1px solid #8c8c8c;
    color: #fff;
    font-weight: bold;
    font-size: 12px;
    line-height: 17px;
    text-align: center;
}
.runs .name {
    text-align: left;
}
.runs .ico {
    width: 15px;
    height: 15px;
    margin: 0 5px 0 3px;
    vertical-align: -3px;
}
.play {
    display: inline-block;
    border: 4px solid transparent;
    border-left: 6px solid #48b030;
    border-right: 0;
}

/* status */
.status {
    display: flex;
    align-items: center;
    height: 21px;
    padding: 0 3px 0 4px;
    flex: none;
}
.status > * {
    display: flex;
    align-items: center;
    gap: 3px;
    height: 16px;
    padding-right: 6px;
    margin-right: 6px;
    border-right: 1px solid #a0a0a0;
}
.status > :last-child {
    padding: 0;
    margin: 0;
    border: 0;
}
.status b {
    font-weight: normal;
    color: #10902a;
}
.status label {
    margin-left: 5px;
    border: 0;
}
.status [type="checkbox"]:checked {
    display: flex;
}
.status [type="checkbox"]:checked::before {
    content: "";
    width: 4px;
    height: 7px;
    margin: 1px auto;
    border: solid #2c3c80;
    border-width: 0 2px 2px 0;
    transform: rotate(40deg);
}
.status .push {
    margin-left: auto;
}
.push::before {
    content: "";
    height: 16px;
    border-left: 1px solid #a0a0a0;
    margin-right: 4px;
}
.skype {
    width: 16px;
    height: 16px;
}
.led {
    width: 11px;
    height: 11px;
    margin-right: -1px;
    background: #00f000;
    border: 1px solid #207020;
}

/* floating Time and Sales window */
.dialog {
    position: absolute;
    left: 271px;
    top: 40px;
    width: 398px;
    height: 799px;
    padding: 0 6px 5px;
    display: flex;
    flex-direction: column;
    border: 1px solid #46545f;
    border-radius: 7px;
    background: linear-gradient(100deg, #f2fbfd, #c2eef6 25%, #ddfafc 50%, #b8e4f0 80%, #d8f6fa);
    box-shadow: 0 1px 7px rgba(0, 0, 0, 0.6), inset 0 0 0 1px #f4ffff;
}
.caption {
    display: flex;
    align-items: flex-start;
    height: 28px;
    font-family: "Open Sans", sans-serif;
    font-size: 12px;
    flex: none;
}
.java {
    width: 16px;
    height: 16px;
    margin-top: 6px;
}
.caption span {
    flex: 1;
    padding: 6px 5px 0;
}
.caption-buttons {
    display: flex;
}
.caption-buttons button {
    width: 27px;
    height: 18px;
    border: 1px solid #8a98a4;
    border-top: 0;
    border-right-width: 0;
    background: linear-gradient(#f0f8fa, #cfe0e8);
    display: flex;
    align-items: center;
    justify-content: center;
}
.caption-buttons .min {
    border-radius: 0 0 0 4px;
    width: 28px;
}
.caption-buttons .close {
    width: 47px;
    border-right-width: 1px;
    border-radius: 0 0 4px 0;
}
.caption-buttons svg {
    width: 14px;
    height: 11px;
}
.client {
    flex: 1;
    min-height: 0;
    display: flex;
    flex-direction: column;
    border: 1px solid #6e7880;
    background: #f0f0f0;
}
.filter {
    display: flex;
    align-items: center;
    justify-content: center;
    gap: 5px;
    height: 30px;
    padding-right: 4px;
    flex: none;
}
.filter .spin {
    width: 119px;
}
.ticks {
    flex: 1;
    border: 1px solid #808080;
    border-width: 1px 1px 1px 0;
}
.ticks th {
    height: 24px;
    padding: 2px 5px 0;
    border-right: 1px solid #e0e2e6;
    border-bottom: 1px solid #d5d5d5;
    font-weight: normal;
    text-align: left;
    background: linear-gradient(#fff 50%, #f2f4f6);
}
.ticks td {
    height: 16px;
    padding: 0;
    line-height: 14px;
    text-align: center;
    vertical-align: top;
    background: #fff;
    border-right: 1px solid #707070;
    border-bottom: 1px solid #707070;
}
.ticks td:first-child {
    color: #a80020;
    padding-left: 24px;
}
.ticks td:last-child {
    color: #10b010;
    padding-left: 24px;
    border-right: 0;
}
.ticks .sum td {
    color: #0000a0;
}
.copy {
    height: 15px;
    line-height: 15px;
    flex: none;
}
```
FILE: charts.js
```js
// every chart svg uses workspace coordinates, see its viewBox
function el(parent, name, attrs, text) {
    const node = document.createElementNS('http://www.w3.org/2000/svg', name);
    for (const key in attrs) node.setAttribute(key, attrs[key]);
    if (text) node.textContent = text;
    parent.appendChild(node);
    return node;
}

function line(svg, points, color, extra) {
    el(svg, 'polyline', Object.assign({ points: points, fill: 'none', stroke: color }, extra));
}

function grid(svg, xs, ys, left, right, top, bottom) {
    xs.forEach(x => el(svg, 'path', { class: 'gridline', d: `M${x}.5 ${top}V${bottom}` }));
    ys.forEach(y => el(svg, 'path', { class: 'gridline', d: `M${left} ${y}.5H${right}` }));
}

function frame(svg, left, axisX, splitY, bottomY, end) {
    el(svg, 'path', { class: 'axis', d: `M${axisX}.5 ${end - 300}V${bottomY}M${left} ${splitY}.5H${axisX}M${left} ${bottomY}.5H${axisX}.5V${end - 2}` });
}

function labels(svg, axisX, list) {
    list.forEach(([y, text]) => {
        el(svg, 'path', { d: `M${axisX + 1} ${y}.5h5`, stroke: 'var(--ink)' });
        el(svg, 'text', { x: axisX + 27, y: y + 4, 'text-anchor': 'middle' }, text);
    });
}

function tag(svg, axisX, y, text, fill, color, border) {
    el(svg, 'path', { d: `M${axisX - 30} ${y}.5h31`, stroke: '#888', 'stroke-dasharray': '2 2' });
    el(svg, 'rect', { x: axisX + 2.5, y: y - 5.5, width: 50, height: 12, fill: fill, stroke: border || '#000' });
    el(svg, 'text', { x: axisX + 27, y: y + 4, 'text-anchor': 'middle', style: `fill:${color}` }, text);
}

function times(svg, y, list) {
    list.forEach(([x, text]) => {
        if (x > 780) el(svg, 'path', { class: 'axis', d: `M${x}.5 ${y - 11}v11` });
        el(svg, 'text', { x: x + 2, y: y - 1 }, text);
    });
}

function info(svg, top, values) {
    const names = ['Дата', 'Время', 'Открытие', 'Максимум', 'Минимум', 'Закрытие', 'Объём'];
    names.forEach((name, i) => {
        el(svg, 'text', { class: 'info', x: 786, y: top + i * 19 }, name);
        el(svg, 'text', { class: 'info', x: 915, y: top + i * 19, 'text-anchor': 'end' }, values[i]);
    });
}

function marker(svg, x, y, fill) {
    el(svg, 'path', { d: `M${x - 5} ${y}h11l-5.5 6z`, fill: fill });
}

function closeBox(svg, x, y) {
    el(svg, 'path', { class: 'axis', d: `M${x}.5 ${y}.5h10v10h-10zl10 10M${x + 10}.5 ${y}.5l-10 10` });
}

// EUR/USD ticks
const eur = document.getElementById('eurusd');
grid(eur, [677], [131, 159, 188, 216, 245, 330, 359, 387], 270, 707, 112, 399);
el(eur, 'path', { class: 'axis', d: 'M707.5 112V399M270 399.5H707.500V410' });
line(eur, '669,258 673,270 675,284 677,274', '#1c7a24');
line(eur, '669,290 673,303 675,313 677,302', '#8c2028');
labels(eur, 707, [[131, '1,27235'], [159, '1,27230'], [188, '1,27225'], [216, '1,27220'], [245, '1,27215'], [330, '1,27200'], [359, '1,27195'], [387, '1,27190']]);
tag(eur, 707, 273, '1,27210', '#c0c0c0', '#000');
tag(eur, 707, 302, '1,27205', '#c0c0c0', '#000');
marker(eur, 677, 113, '#777');
el(eur, 'text', { x: 761, y: 410, 'text-anchor': 'end' }, '2012-05-16');

// GBP/USD candles: high, body top, body bottom, low; 1 = rising
const candles = [
    [128, 129, 131, 132], [129, 131, 132, 135], [130, 132, 133, 136], [130, 132, 137, 138], [130, 133, 137, 142, 1],
    [133, 134, 138, 141], [132, 134, 138, 142, 1], [133, 135, 139, 141], [134, 136, 139, 140], [133, 135, 138, 140, 1],
    [133, 135, 137, 138], [134, 136, 138, 140], [134, 136, 141, 142], [131, 133, 142, 142, 1], [116, 128, 132, 132, 1],
    [120, 124, 127, 134], [120, 122, 130, 132], [126, 128, 132, 138], [130, 134, 140, 145], [132, 136, 159, 160],
    [150, 155, 157, 161, 1], [147, 150, 156, 157, 1], [147, 150, 165, 167], [160, 164, 181, 182], [168, 172, 176, 182, 1],
    [168, 171, 173, 176], [165, 171, 175, 180], [170, 174, 191, 192], [182, 190, 191, 201], [187, 188, 192, 200, 1],
    [180, 185, 190, 195], [181, 184, 192, 193, 1], [180, 183, 207, 209], [192, 196, 204, 205, 1], [194, 197, 199, 203],
    [196, 198, 200, 203], [198, 200, 204, 206], [200, 202, 212, 215], [208, 209, 211, 214, 1], [206, 209, 215, 217],
    [213, 217, 226, 227], [216, 220, 227, 227, 1], [216, 220, 223, 225], [220, 222, 223, 226], [220, 221, 223, 224, 1],
    [219, 220, 222, 223, 1], [219, 220, 223, 224], [221, 223, 225, 226], [223, 224, 225, 226], [224, 225, 231, 232],
    [230, 232, 235, 239], [230, 232, 235, 238], [232, 234, 235, 237, 1], [232, 235, 241, 242], [239, 241, 242, 242, 1],
    [237, 238, 241, 242, 1], [237, 239, 243, 244], [240, 243, 246, 248], [243, 246, 250, 256], [242, 247, 249, 250, 1],
    [242, 244, 248, 249, 1], [242, 245, 246, 250], [243, 244, 262, 262], [248, 250, 262, 262, 1], [249, 250, 274, 275],
    [252, 253, 274, 277, 1], [240, 246, 255, 260, 1], [227, 244, 255, 262], [240, 241, 255, 258, 1], [240, 241, 302, 317],
    [290, 291, 302, 307, 1], [281, 291, 293, 296], [267, 274, 294, 294, 1], [265, 270, 275, 280, 1], [262, 271, 293, 293],
    [270, 271, 293, 293, 1], [257, 264, 271, 272, 1], [261, 264, 272, 275], [265, 271, 278, 281], [273, 278, 289, 293],
    [283, 288, 297, 306], [282, 283, 297, 302, 1]
];
const volumes = [
    3, 5, 7, 9, 13, 11, 9, 6, 4, 7, 7, 7, 10, 13, 26, 18, 31, 33, 31, 33, 33, 23, 30, 30, 26, 27, 32, 45, 61, 44, 45, 38, 46,
    30, 20, 13, 15, 26, 18, 19, 29, 20, 14, 9, 5, 4, 4, 4, 4, 7, 13, 13, 9, 14, 12, 8, 10, 13, 18, 12, 11, 15, 33, 32, 45, 41,
    53, 49, 37, 59, 38, 40, 39, 31, 47, 50, 45, 49, 47, 42, 60, 13
];
const gbp = document.getElementById('gbpusd');
grid(gbp, [794, 824, 854, 884, 914, 944, 974, 1004, 1034, 1064, 1094, 1124, 1154, 1184], [132, 152, 172, 192, 212, 233, 253, 273, 293, 313, 340, 370], 777, 1214, 112, 399);
frame(gbp, 777, 1214, 319, 399, 412);
candles.forEach(([high, top, bottom, low, up], i) => {
    const x = 779 + i * 5;
    const fill = up ? '#8c8c8c' : '#3878a0';
    el(gbp, 'rect', { x: x, y: high, width: 1, height: low - high, fill: fill });
    el(gbp, 'rect', { x: x - 1, y: top, width: 3, height: bottom - top, fill: fill });
});
volumes.forEach((v, i) => el(gbp, 'rect', { x: 778 + i * 5, y: 392 - v, width: 3, height: v, fill: '#3878a0' }));
line(gbp, '777,134 790,135 868,135 873,136 890,142 906,151 920,163 940,177 960,190 975,199 990,207 1008,214 1030,223 1048,228 1065,232 1080,237 1095,243 1103,246 1115,249 1124,252 1130,258 1140,263 1155,268 1165,271 1172,273 1185,281', '#3f86b0');
el(gbp, 'path', { d: 'M777 283.500H1214M1185 280.500H1214', stroke: '#999', 'stroke-dasharray': '3 2' });
el(gbp, 'path', { d: 'M1113.500 219v5h-1l2 2 2-2h-1v-5z', fill: '#900', stroke: '#e01020' });
el(gbp, 'path', { d: 'M1121 319l3.500-3 3.500 3z', fill: '#20e020' });
el(gbp, 'path', { d: 'M847 112h6l-3 3z', fill: '#e01020' });
marker(gbp, 1185, 113, '#ccc');
labels(gbp, 1214, [[112, '1,6120'], [132, '1,6097'], [152, '1,6074'], [172, '1,6051'], [192, '1,6028'], [212, '1,6005'], [233, '1,5982'], [253, '1,5959'], [273, '1,5936'], [293, '1,5913'], [313, '1,5890'], [340, '7831'], [370, '3339']]);
tag(gbp, 1214, 280, '', '#3878a0', '#fff');
tag(gbp, 1214, 283, '1,59247', '#fff', '#000', '#fff');
tag(gbp, 1214, 379, '1936,08', '#3878a0', '#ddd');
closeBox(gbp, 782, 328);
el(gbp, 'text', { x: 797, y: 339 }, 'VOLUME : 6912,68');
el(gbp, 'path', { d: 'M885 334.500h9', stroke: '#3f86b0', 'stroke-width': 2 });
info(gbp, 132, ['2012-05-16', '15:30', '1,59090', '1,59255', '1,59049', '1,59247', '1936,08']);
times(gbp, 411, [[777, '2012'], [854, '06:30'], [944, '15:30'], [1034, '00:30'], [1124, '09:30']]);
el(gbp, 'text', { x: 1268, y: 410, 'text-anchor': 'end' }, '2012-05-16');

// USD/CHF
const chf = document.getElementById('usdchf');
grid(chf, [677], [459, 477, 497, 515, 552, 570, 589, 607], 270, 707, 441, 728);
frame(chf, 270, 707, 625, 728, 741);
el(chf, 'path', { d: 'M270 671.500H707M270 679.500H707M270 687.500H707', stroke: '#aaa', 'stroke-dasharray': '6 4' });
line(chf, '669,510 673,507 678,505', '#222');
line(chf, '669,565 673,562 678,560', '#888');
line(chf, '669,620 673,617 678,614', '#3878a0');
line(chf, '669,665 673,667 677,669', '#3878a0');
el(chf, 'path', { d: 'M672.500 521v42', stroke: '#777' });
el(chf, 'path', { d: 'M677.500 523v25', stroke: '#3878a0' });
labels(chf, 707, [[459, '0,9466'], [477, '0,9460'], [496, '0,9454'], [515, '0,9448'], [552, '0,9436'], [570, '0,9430'], [589, '0,9424'], [608, '0,9418'], [639, '500'], [699, '-250']]);
tag(chf, 707, 505, '0,945092', '#222', '#ddd');
tag(chf, 707, 536, '0,94412', '#fff', '#000');
tag(chf, 707, 560, '0,94334', '#808080', '#222');
tag(chf, 707, 614, '0,941588', '#3878a0', '#ddd');
tag(chf, 707, 668, '133,92677', '#3878a0', '#ddd');
[[669, '100'], [678, '0'], [685, '-100']].forEach(([y, text]) => el(chf, 'text', { x: 703, y: y, 'text-anchor': 'end', style: 'fill:#999' }, text));
marker(chf, 677, 442, '#aaa');
el(chf, 'text', { x: 761, y: 739, 'text-anchor': 'end' }, '2012-05-16');

// USD/JPY
const jpy = document.getElementById('usdjpy');
grid(jpy, [794, 824, 854, 884, 914, 944, 974, 1004, 1034, 1064, 1094, 1124, 1154, 1184], [462, 483, 503, 524, 544, 564, 585, 605, 626, 646, 669], 777, 1214, 441, 728);
frame(jpy, 777, 1214, 648, 728, 741);
const closes = [
    [777, 614], [784, 621], [789, 600], [797, 590], [804, 583], [809, 600], [819, 587], [824, 600], [829, 602], [834, 598], [839, 599],
    [849, 593], [855, 583], [859, 589], [874, 552], [879, 563], [890, 567], [895, 577], [909, 545], [915, 557], [920, 583], [925, 613],
    [930, 623], [935, 628], [939, 628], [944, 615], [949, 609], [955, 608], [962, 605], [967, 605], [975, 607], [983, 604], [989, 597],
    [995, 606], [1000, 609], [1005, 604], [1010, 602], [1015, 596], [1020, 599], [1024, 594], [1029, 596], [1039, 588], [1045, 592],
    [1055, 576], [1059, 558], [1069, 546], [1075, 518], [1079, 507], [1088, 523], [1095, 527], [1107, 502], [1114, 487], [1119, 486],
    [1124, 483], [1135, 491], [1139, 490], [1144, 483], [1149, 497], [1159, 476], [1169, 459], [1174, 470], [1179, 487], [1184, 490]
];
for (let i = 1; i < closes.length; i++) {
    const [a, b] = [closes[i - 1], closes[i]];
    line(jpy, `${a} ${b}`, b[1] > a[1] ? '#f08050' : '#808080');
}
line(jpy, '777,613 790,610 803,603 820,599 837,596 860,596 877,592 895,588 910,583 940,583 953,587 970,587 1003,590 1020,593 1033,596 1065,599 1073,593 1087,583 1103,573 1133,548 1173,517 1184,511', '#777');
line(jpy, '777,581 830,579 880,579 915,581 960,586 1020,590 1090,593 1125,593 1160,592 1184,590', '#f5803c', { 'stroke-width': 1.5 });
el(jpy, 'path', { d: 'M777 490.500H1214', stroke: '#888', 'stroke-dasharray': '2 2' });
el(jpy, 'path', { d: 'M777 669.500H1214M777 712.500H1214', stroke: '#aaa', 'stroke-dasharray': '8 5' });
line(jpy, '777,711 785,700 797,670 803,668 812,675 820,689 833,700 840,701 848,688 856,670 866,667 876,667 884,682 893,703 900,696 908,669 914,675 924,714 932,720 937,718 944,695 952,669 962,660 968,664 975,677 980,674 986,671 996,692 1003,705 1010,695 1020,675 1030,670 1045,680 1056,675 1062,669 1075,667 1085,672 1098,690 1105,680 1114,664 1124,668 1132,682 1145,697 1155,690 1165,681 1172,684 1179,700 1184,713', '#777', { 'stroke-dasharray': '6 3' });
line(jpy, '779,709 786,703 793,690 800,674 806,668 814,670 823,684 832,697 840,700 850,690 860,672 868,667 876,667 884,674 893,690 899,697 906,685 912,674 920,685 929,707 936,721 942,716 950,695 957,670 965,662 972,668 980,676 988,670 997,686 1006,701 1014,700 1024,681 1032,671 1044,678 1054,678 1062,671 1072,666 1085,668 1094,681 1102,689 1112,678 1120,667 1128,671 1138,685 1148,696 1158,689 1168,681 1175,685 1180,693 1184,700', '#f08050', { 'stroke-dasharray': '6 3' });
marker(jpy, 1185, 442, '#777');
labels(jpy, 1214, [[442, '80,57'], [462, '80,48'], [483, '80,39'], [503, '80,30'], [524, '80,21'], [544, '80,12'], [564, '80,03'], [585, '79,94'], [605, '79,85'], [626, '79,76'], [646, '79,67'], [669, '79,8']]);
tag(jpy, 1214, 490, '80,357', '#808080', '#eee', '#808080');
tag(jpy, 1214, 510, '80,271333', '#808080', '#000');
tag(jpy, 1214, 590, '79,917395', '#f98042', '#000');
tag(jpy, 1214, 701, '34,26967', '#f98042', '#000');
tag(jpy, 1214, 716, '14,60728', '#808080', '#000');
el(jpy, 'text', { x: 1199, y: 667, style: 'fill:#999' }, '80');
el(jpy, 'text', { x: 1199, y: 710, style: 'fill:#999' }, '20');
closeBox(jpy, 782, 657);
const stoch = el(jpy, 'text', { x: 797, y: 668 }, 'STOCH: (5, 3, SMA, 3, SMA) (Slow %K: 53,79013, ');
el(stoch, 'tspan', { style: 'fill:#f08050' }, 'Slow %D: 36,44988');
el(stoch, 'tspan', {}, ')');
info(jpy, 461, ['2012-05-16', '15:00', '80,354', '80,417', '80,342', '80,357', '13153,67']);
times(jpy, 740, [[777, '2012'], [854, '21:00 13 май'], [944, '15:00 14 май'], [1034, '09:00 15 май'], [1124, '03:00 16 май']]);
el(jpy, 'text', { x: 1268, y: 739, 'text-anchor': 'end' }, 'май 2012');
```
